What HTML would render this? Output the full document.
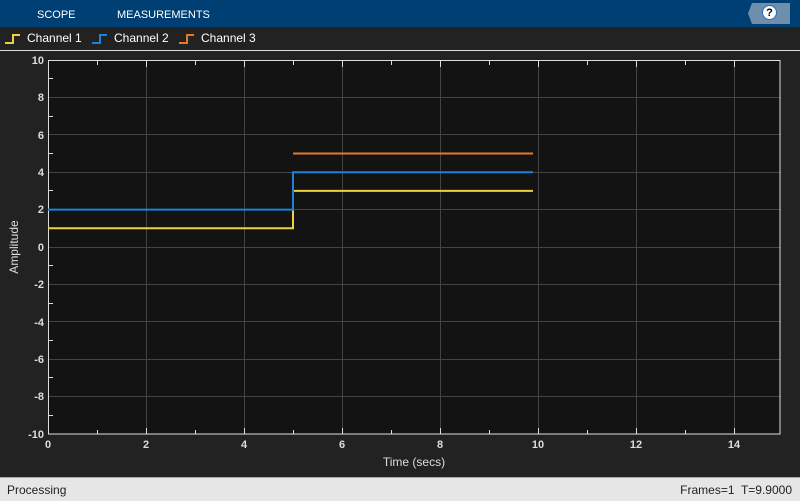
<!DOCTYPE html>
<html><head><style>
body{margin:0;width:800px;height:500px;background:#222;font-family:"Liberation Sans",sans-serif;overflow:hidden;position:relative}
.tb{position:absolute;left:0;top:0;width:800px;height:27px;background:#003f73;color:#fff;font-size:11px}
.tb span{position:absolute;top:9px}
.help{position:absolute;left:748px;top:3px;width:42px;height:21px;background:#6e8eab;clip-path:polygon(4px 0,100% 0,100% 100%,4px 100%,0 50%)}
.help div{position:absolute;left:14px;top:2px;width:15px;height:15px;border-radius:50%;background:#fff;border:1px solid #1e6fc0;box-sizing:border-box;color:#000;font-weight:bold;font-size:11px;text-align:center;line-height:14px}
.leg{position:absolute;top:31px;font-size:12px;color:#fff}
.status{position:absolute;left:0;top:477px;width:800px;height:23px;background:#e6e6e6;border-top:1px solid #aaa;font-size:12px;color:#222}
</style></head><body>
<div class="tb"><span style="left:37px">SCOPE</span><span style="left:117px">MEASUREMENTS</span></div>
<div class="help"><div>?</div></div>
<svg width="800" height="500" style="position:absolute;left:0;top:0" font-family="Liberation Sans, sans-serif">
<g fill="none" stroke-width="2">
<path d="M5 43h8v-8h7" stroke="#edd13e"/>
<path d="M92 43h8v-8h7" stroke="#1e80d8"/>
<path d="M179 43h8v-8h7" stroke="#e7782b"/>
</g>
<line x1="0" y1="50.5" x2="800" y2="50.5" stroke="#ddd" stroke-width="1"/>
<rect x="48" y="60" width="732" height="374" fill="#131313"/>
<g stroke="#444" stroke-width="1">
<path d="M146.5 60v374M244.5 60v374M342.5 60v374M440.5 60v374M538.5 60v374M636.5 60v374M734.5 60v374"/>
<path d="M48 97.5h732M48 134.5h732M48 172.5h732M48 209.5h732M48 247.5h732M48 284.5h732M48 321.5h732M48 359.5h732M48 396.5h732"/>
</g>
<g stroke="#ddd" stroke-width="1">
<rect x="48.5" y="60.5" width="731.5" height="373.5" fill="none"/>
<path d="M97.5 434v-4M195.5 434v-4M293.5 434v-4M391.5 434v-4M489.5 434v-4M587.5 434v-4M685.5 434v-4M146.5 434v-6M244.5 434v-6M342.5 434v-6M440.5 434v-6M538.5 434v-6M636.5 434v-6M734.5 434v-6"/>
<path d="M97.5 61v4M195.5 61v4M293.5 61v4M391.5 61v4M489.5 61v4M587.5 61v4M685.5 61v4M146.5 61v6M244.5 61v6M342.5 61v6M440.5 61v6M538.5 61v6M636.5 61v6M734.5 61v6"/>
<path d="M49 78.5h4M49 116.5h4M49 153.5h4M49 190.5h4M49 228.5h4M49 265.5h4M49 303.5h4M49 340.5h4M49 377.5h4M49 415.5h4"/>
</g>
<g fill="none" stroke-width="2">
<path d="M48 228.3H293V190.9H533" stroke="#edd13e"/>
<path d="M48 209.6H293V172.2H533" stroke="#1e80d8"/>
<path d="M293 153.5H533" stroke="#e7782b"/>
</g>
<g fill="#ddd" font-size="11" font-weight="bold" text-anchor="end">
<text x="44" y="64">10</text><text x="44" y="101">8</text><text x="44" y="139">6</text><text x="44" y="176">4</text><text x="44" y="213">2</text><text x="44" y="251">0</text><text x="44" y="288">-2</text><text x="44" y="326">-4</text><text x="44" y="363">-6</text><text x="44" y="400">-8</text><text x="44" y="438">-10</text>
</g>
<g fill="#ddd" font-size="11" font-weight="bold" text-anchor="middle">
<text x="48" y="448">0</text><text x="146" y="448">2</text><text x="244" y="448">4</text><text x="342" y="448">6</text><text x="440" y="448">8</text><text x="538" y="448">10</text><text x="636" y="448">12</text><text x="734" y="448">14</text>
</g>
<g fill="#ddd" font-size="12" text-anchor="middle">
<text x="414" y="466">Time (secs)</text>
<text transform="translate(18 247) rotate(-90)">Amplitude</text>
</g>
</svg>
<div class="leg" style="left:27px">Channel 1</div>
<div class="leg" style="left:114px">Channel 2</div>
<div class="leg" style="left:201px">Channel 3</div>
<div class="status"><span style="position:absolute;left:7px;top:5px">Processing</span><span style="position:absolute;right:8px;top:5px">Frames=1&nbsp; T=9.9000</span></div>
</body></html>
